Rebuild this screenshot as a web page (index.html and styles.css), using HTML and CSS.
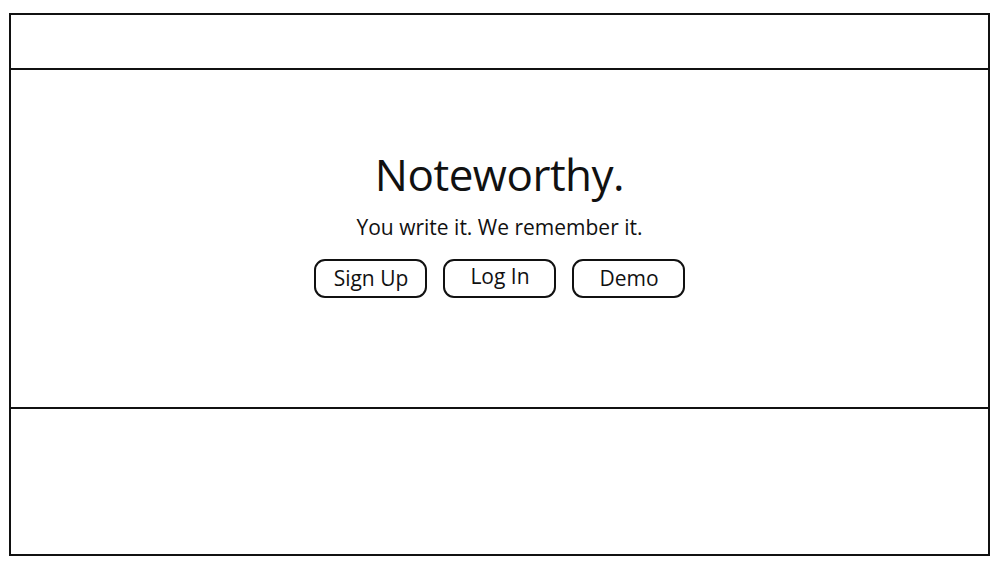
FILE: index.html
```html
<!DOCTYPE html>
<html>
<head>
<meta charset="utf-8">
<link rel="stylesheet" href="styles.css">
</head>
<body>
<div class="frame">
  <header class="top"></header>
  <main class="hero">
    <h1 class="title">Noteworthy.</h1>
    <p class="tagline">You write it. We remember it.</p>
    <div class="actions">
      <button class="btn">Sign Up</button>
      <button class="btn btn-login">Log In</button>
      <button class="btn">Demo</button>
    </div>
  </main>
  <footer class="bottom"></footer>
</div>
</body>
</html>
```
FILE: styles.css
```css
html, body {
  margin: 0;
  padding: 0;
  background: #fff;
}
body {
  font-family: "Open Sans", "Noto Sans", sans-serif;
  color: #111;
}
.frame {
  margin: 13px 0 0 9px;
  width: 981px;
  height: 543px;
  box-sizing: border-box;
  border: 2px solid #111;
  display: flex;
  flex-direction: column;
}
.top {
  height: 53px;
  border-bottom: 2px solid #111;
}
.hero {
  height: 339px;
  border-bottom: 2px solid #111;
  display: flex;
  flex-direction: column;
  align-items: center;
  box-sizing: border-box;
  padding-top: 74px;
}
.bottom {
  flex: 1;
}
.title {
  margin: 0;
  font-size: 44px;
  font-weight: 400;
  line-height: 60px;
  letter-spacing: -0.5px;
}
.tagline {
  margin: 9px 0 0;
  font-size: 21px;
  line-height: 28px;
  letter-spacing: 0;
}
.actions {
  display: flex;
  gap: 16px;
  margin-top: 18px;
}
.btn {
  width: 113px;
  height: 39px;
  box-sizing: border-box;
  border: 2px solid #111;
  border-radius: 11px;
  background: #fff;
  font-family: inherit;
  font-size: 21px;
  color: #111;
  padding: 0 0 0 1px;
  line-height: 1;
}
.btn-login {
  padding-bottom: 4px;
}
```
